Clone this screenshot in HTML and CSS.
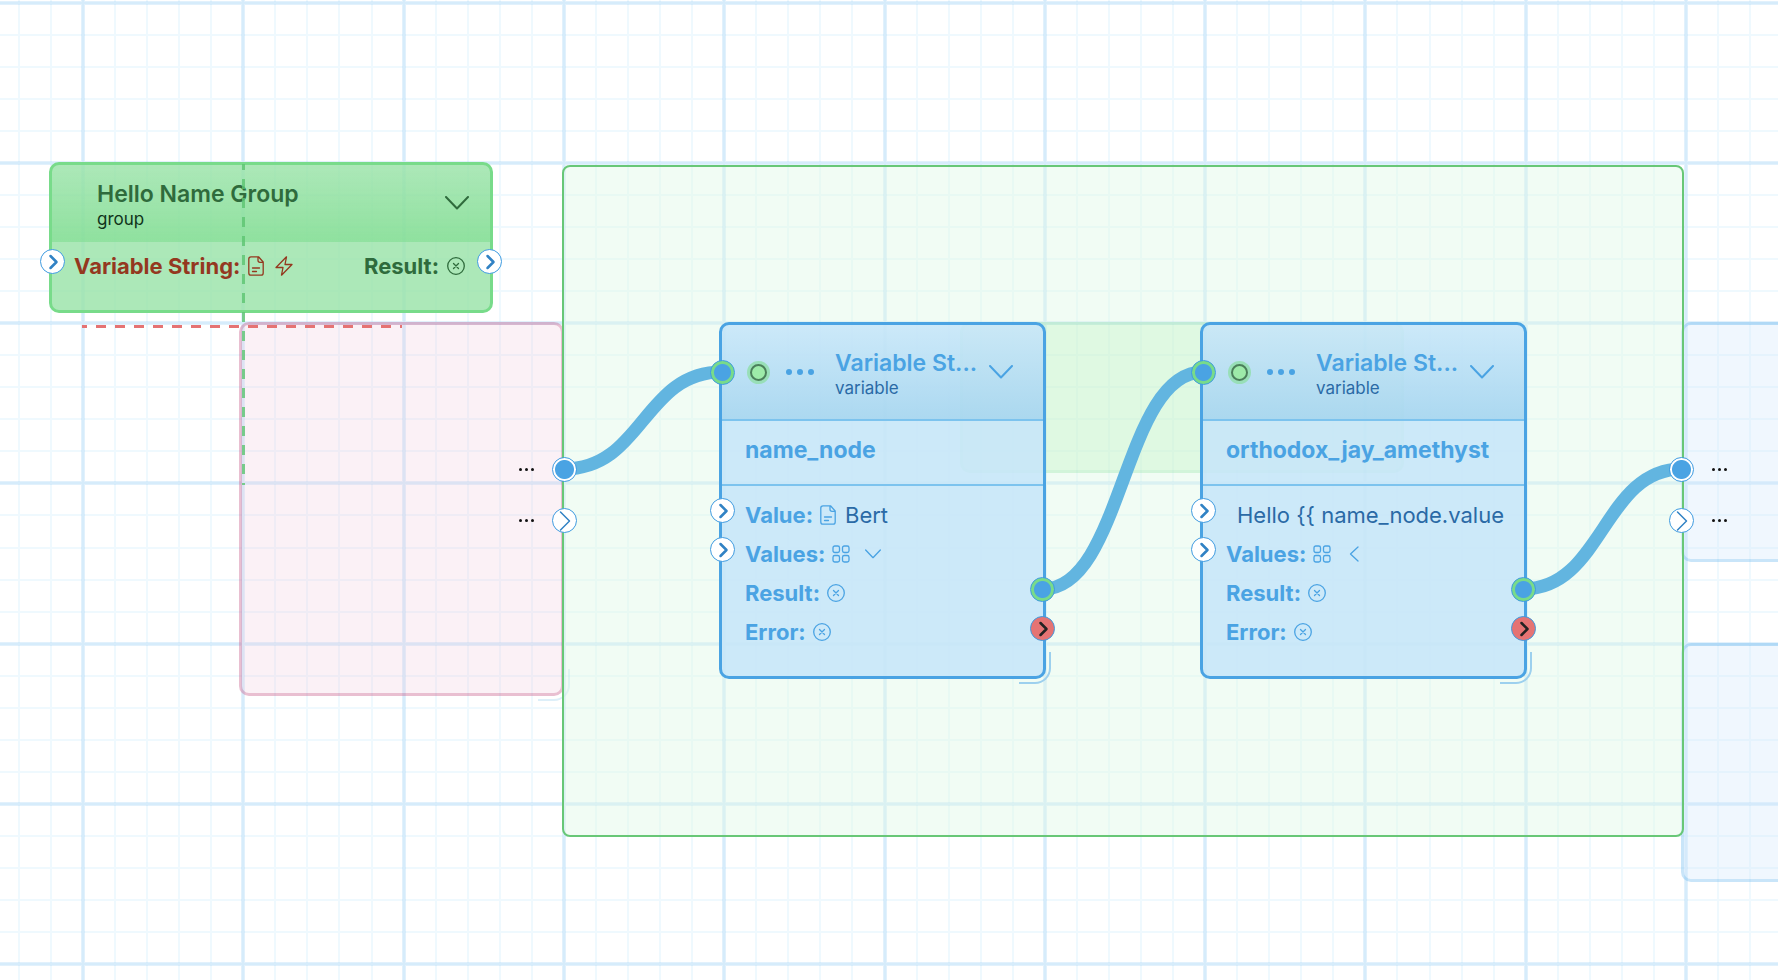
FILE: index.html
```html
<!DOCTYPE html>
<html lang="en">
<head>
<meta charset="utf-8">
<title>Graph editor</title>
<link rel="stylesheet" href="styles.css">
</head>
<body>
<svg class="defs" aria-hidden="true">
  <symbol id="doc" viewBox="0 0 16 20"><path d="M10.500 .8H3Q.8 .8 .8 3V17Q.8 19.200 3 19.200H13Q15.200 19.200 15.200 17V6ZM10 1V4.500Q10 6.300 12 6.300H15M4.500 12H11.500M4.500 15.500H8.500"/></symbol>
  <symbol id="bolt" viewBox="0 0 18 20"><path d="M11.500 .8L1 11.500H8L6.500 19.200L17 8.500H10Z"/></symbol>
  <symbol id="any" viewBox="0 0 18 18"><circle cx="9" cy="9" r="8.300"/><path d="M6.500 6.500L11.500 11.500M11.500 6.500L6.500 11.500"/></symbol>
  <symbol id="grid4" viewBox="0 0 18 18"><rect x="1" y="1" width="6.500" height="6.500" rx="1.800"/><rect x="10.500" y="1" width="6.500" height="6.500" rx="1.800"/><rect x="1" y="10.500" width="6.500" height="6.500" rx="1.800"/><rect x="10.500" y="10.500" width="6.500" height="6.500" rx="1.800"/></symbol>
  <symbol id="down" viewBox="0 0 24 14"><path d="M1 1L12 12.500L23 1"/></symbol>
  <symbol id="left" viewBox="0 0 10 16"><path d="M9 1L1.500 8L9 15"/></symbol>
  <symbol id="port" viewBox="0 0 24 24"><path d="M9.500 6L15.500 12L9.500 18"/></symbol>
  <symbol id="portwide" viewBox="0 0 24 24"><path d="M7.500 3L16.500 12L7.500 21"/></symbol>
</svg>
<main class="canvas">
  <svg class="layer" aria-hidden="true">
    <path id="minor" class="minor"/>
    <path id="major" class="major"/>
  </svg>

  <section class="node group">
    <header class="head">
      <div class="titles"><h2>Hello Name Group</h2><p>group</p></div>
      <button class="toggle" aria-label="Collapse"><svg><use href="#down"/></svg></button>
    </header>
    <div class="ports">
      <span class="label warn">Variable String: <svg class="i-doc"><use href="#doc"/></svg><svg class="i-bolt"><use href="#bolt"/></svg></span>
      <span class="label">Result: <svg class="i-any"><use href="#any"/></svg></span>
    </div>
    <i class="handle in group-y"><svg><use href="#port"/></svg></i>
    <i class="handle out group-y"><svg><use href="#port"/></svg></i>
  </section>

  <section class="node pink"></section>
  <section class="node side side-a"></section>
  <section class="node side side-b"></section>
  <div class="corner corner-pink"></div>
  <section class="frame"></section>
  <div class="node ghost"></div>

  <svg class="layer over" aria-hidden="true">
    <path class="axis-y" d="M243.500 164V485"/>
    <path class="axis-x" d="M82 326.500H402"/>
    <g class="edges">
      <path d="M564 469C643 469 643 372 722 372"/>
      <path d="M1043 589C1123 589 1123 372 1203 372"/>
      <path d="M1523 589C1603 589 1603 469 1682 469"/>
    </g>
  </svg>

  <section class="node var var-a">
    <header class="head">
      <i class="status"></i><button class="more" aria-label="More"><b></b><b></b><b></b></button>
      <div class="titles"><h2>Variable St...</h2><p>variable</p></div>
      <button class="toggle" aria-label="Collapse"><svg><use href="#down"/></svg></button>
    </header>
    <h3 class="name">name_node</h3>
    <div class="fields">
      <div class="row"><label for="va">Value:</label><svg class="i-doc"><use href="#doc"/></svg><input id="va" value="Bert"></div>
      <div class="row"><span>Values:</span><svg class="i-grid"><use href="#grid4"/></svg><button class="mini" aria-label="Close values"><svg class="i-down"><use href="#down"/></svg></button></div>
      <div class="row"><span>Result:</span><svg class="i-any"><use href="#any"/></svg></div>
      <div class="row"><span>Error:</span><svg class="i-any"><use href="#any"/></svg></div>
    </div>
    <i class="handle in y1 linked"></i>
    <i class="handle in y2"><svg><use href="#port"/></svg></i>
    <i class="handle in y3"><svg><use href="#port"/></svg></i>
    <i class="handle out y4 linked"></i>
    <i class="handle out y5 error"><svg><use href="#port"/></svg></i>
    <div class="corner"></div>
  </section>

  <section class="node var var-b">
    <header class="head">
      <i class="status"></i><button class="more" aria-label="More"><b></b><b></b><b></b></button>
      <div class="titles"><h2>Variable St...</h2><p>variable</p></div>
      <button class="toggle" aria-label="Collapse"><svg><use href="#down"/></svg></button>
    </header>
    <h3 class="name">orthodox_jay_amethyst</h3>
    <div class="fields">
      <div class="row"><input class="wide" aria-label="Value" value="Hello {{ name_node.value"></div>
      <div class="row"><span>Values:</span><svg class="i-grid"><use href="#grid4"/></svg><button class="mini" aria-label="Open values"><svg class="i-left"><use href="#left"/></svg></button></div>
      <div class="row"><span>Result:</span><svg class="i-any"><use href="#any"/></svg></div>
      <div class="row"><span>Error:</span><svg class="i-any"><use href="#any"/></svg></div>
    </div>
    <i class="handle in y1 linked"></i>
    <i class="handle in y2"><svg><use href="#port"/></svg></i>
    <i class="handle in y3"><svg><use href="#port"/></svg></i>
    <i class="handle out y4 linked"></i>
    <i class="handle out y5 error"><svg><use href="#port"/></svg></i>
    <div class="corner"></div>
  </section>

  <div class="boundary start">
    <div class="pin"><span class="dots"><b></b><b></b><b></b></span><i class="handle dot"></i></div>
    <div class="pin"><span class="dots"><b></b><b></b><b></b></span><i class="handle"><svg><use href="#portwide"/></svg></i></div>
  </div>
  <div class="boundary end">
    <div class="pin"><i class="handle dot"></i><span class="dots"><b></b><b></b><b></b></span></div>
    <div class="pin"><i class="handle"><svg><use href="#portwide"/></svg></i><span class="dots"><b></b><b></b><b></b></span></div>
  </div>
</main>
<script src="grid.js"></script>
</body>
</html>
```
FILE: styles.css
```css
* { box-sizing: border-box; }
body { margin: 0; font-family: Inter, "Liberation Sans", sans-serif; background: #fff; }
h2, h3, p { margin: 0; }
button { border: 0; padding: 0; background: none; color: inherit; }
svg { display: block; fill: none; stroke: currentColor; stroke-width: 1.3; stroke-linecap: round; stroke-linejoin: round; }
.defs { position: absolute; width: 0; height: 0; }
.canvas { position: relative; height: 100vh; overflow: hidden; }
.layer { position: absolute; inset: 0; width: 100%; height: 100%; stroke-linecap: butt; }
.over { pointer-events: none; }
.minor { stroke: rgba(150, 212, 248, .15); stroke-width: 2; }
.major { stroke: rgba(140, 200, 245, .25); stroke-width: 4; }
.axis-y { stroke: rgba(92, 196, 112, .8); stroke-width: 3; stroke-dasharray: 10 9; stroke-dashoffset: 4; }
.axis-x { stroke: #e57373; stroke-width: 3; stroke-dasharray: 10 9; stroke-dashoffset: 5; }
.edges { stroke: #62b5e0; stroke-width: 13; }

.node { position: absolute; border: 3px solid; border-radius: 10px; }
.group { left: 49px; top: 162px; width: 444px; height: 151px; color: #2f6b3c; border-color: #78db8a; background: rgba(154, 227, 168, .82); }
.pink { left: 239px; top: 322px; width: 325px; height: 374px; border-color: rgba(200, 95, 140, .4); background: rgba(240, 200, 222, .26); background-clip: padding-box; }
.side { left: 1681px; right: -200px; border-color: rgba(120, 190, 240, .4); background: rgba(210, 232, 252, .34); background-clip: padding-box; }
.side-a { top: 322px; height: 240px; }
.side-b { top: 643px; height: 239px; }
.frame { position: absolute; left: 562px; top: 165px; width: 1122px; height: 672px; border: 2px solid #68c777; border-radius: 8px; background: rgba(224, 248, 230, .45); }
.ghost { left: 960px; top: 322px; width: 444px; height: 151px; border-color: rgba(120, 219, 138, .25); background: rgba(170, 238, 170, .25); background-clip: padding-box; }
.var { width: 327px; color: #4aa3e3; border-color: #4aa3e3; background: rgba(198, 229, 249, .86); }
.var-a { left: 719px; top: 322px; }
.var-b { left: 1200px; top: 322px; }

.head { display: flex; align-items: center; }
.group .head { height: 77px; padding: 0 21px 0 45px; border-bottom: 2px solid rgba(120, 219, 138, .5); background: linear-gradient(transparent, rgba(120, 219, 138, .55)); }
.var .head { height: 96px; padding: 0 30px 0 25px; border-bottom: 2px solid #7cc3ee; background: linear-gradient(transparent, rgba(140, 200, 232, .5)); }
.titles { flex: 1; white-space: nowrap; padding-top: 4px; }
h2 { font-size: 23px; line-height: 28px; font-weight: 600; }
.titles p { font-size: 17px; line-height: 22px; color: #2a6aa6; }
.group .titles p { color: #10341b; }
.toggle svg { width: 24px; height: 14px; stroke-width: 2; }
.status { width: 23px; height: 23px; border-radius: 50%; border: 3px solid #98dfb8; background: #9deba9; position: relative; }
.status::after { content: ""; position: absolute; inset: 0; border: 2px solid #4b7f5c; border-radius: 50%; }
.more { display: flex; gap: 5px; margin: 0 21px 0 16px; }
.more b { width: 6px; height: 6px; border-radius: 50%; background: currentColor; }
.name { height: 65px; padding: 0 23px; border-bottom: 2px solid #7cc3ee; font-size: 23px; line-height: 58px; }
.ports { display: flex; justify-content: space-between; padding: 9px 25px 0 22px; font-size: 22px; line-height: 30px; font-weight: 700; }
.label { display: flex; align-items: center; gap: 8px; }
.warn { color: #94381f; }
.fields { padding: 9px 23px 25px; font-size: 22px; font-weight: 700; }
.row { display: flex; align-items: center; gap: 7px; height: 39px; }
input { width: 120px; min-width: 0; padding: 0; margin: 0 0 0 2px; border: 0; background: none; font: 400 22px/30px Inter, "Liberation Sans", sans-serif; color: #2a6aa6; }
.wide { flex: none; width: 268px; margin-left: 11px; }
.i-doc { width: 16px; height: 20px; }
.i-bolt { width: 18px; height: 20px; margin-left: 3px; }
.i-any, .i-grid { width: 18px; height: 18px; }
.mini { width: 32px; display: flex; justify-content: center; }
.i-down { width: 16px; height: 10px; stroke-width: 2; }
.i-left { width: 10px; height: 16px; }

.handle { display: flex; flex: none; align-items: center; justify-content: center; width: 25px; height: 25px; border: 1px solid #3f9be0; border-radius: 50%; background: #fff; color: #3182c4; }
.handle svg { width: 24px; height: 24px; stroke-width: 2.5; flex: none; }
.node > .handle { position: absolute; }
.in { left: -12px; }
.out { right: -12px; }
.group-y { top: 84px; }
.y1 { top: 35px; }
.y2 { top: 173px; }
.y3 { top: 212px; }
.y4 { top: 252px; }
.y5 { top: 291px; }
.linked { background: radial-gradient(circle, #4aa3e3 8px, #78db8a 9px); }
.error { background: #e57373; color: #222; }
.corner { position: absolute; right: -8px; bottom: -8px; width: 32px; height: 32px; border: solid #9dd0ee; border-width: 0 2px 2px 0; border-radius: 0 0 16px 0; }
.corner-pink { left: 538px; top: 669px; border-color: rgba(157, 208, 238, .35); }

.boundary { position: absolute; top: 457px; display: flex; flex-direction: column; gap: 26px; }
.start { left: 519px; }
.end { left: 1669px; }
.pin { display: flex; align-items: center; gap: 18px; }
.pin .handle svg { stroke-width: 1.5; }
.pin .dot { background: radial-gradient(circle, #4aa3e3 9px, #fff 10px); }
.dots { display: flex; gap: 3px; }
.dots b { width: 3px; height: 3px; border-radius: 50%; background: #111; }
```
FILE: grid.js
```js
// Grid lines: one minor cell is a fifth of a major cell.
const cell = 32.06;
let minor = "";
let major = "";
for (let i = -2; i < 90; i++) {
  const x = Math.round(83 + i * cell);
  const y = Math.floor(3 + i * cell);
  const line = `M${x} 0V3000M0 ${y}H3000`;
  minor += line;
  if (i % 5 === 0) major += line;
}
document.getElementById("minor").setAttribute("d", minor);
document.getElementById("major").setAttribute("d", major);
```
